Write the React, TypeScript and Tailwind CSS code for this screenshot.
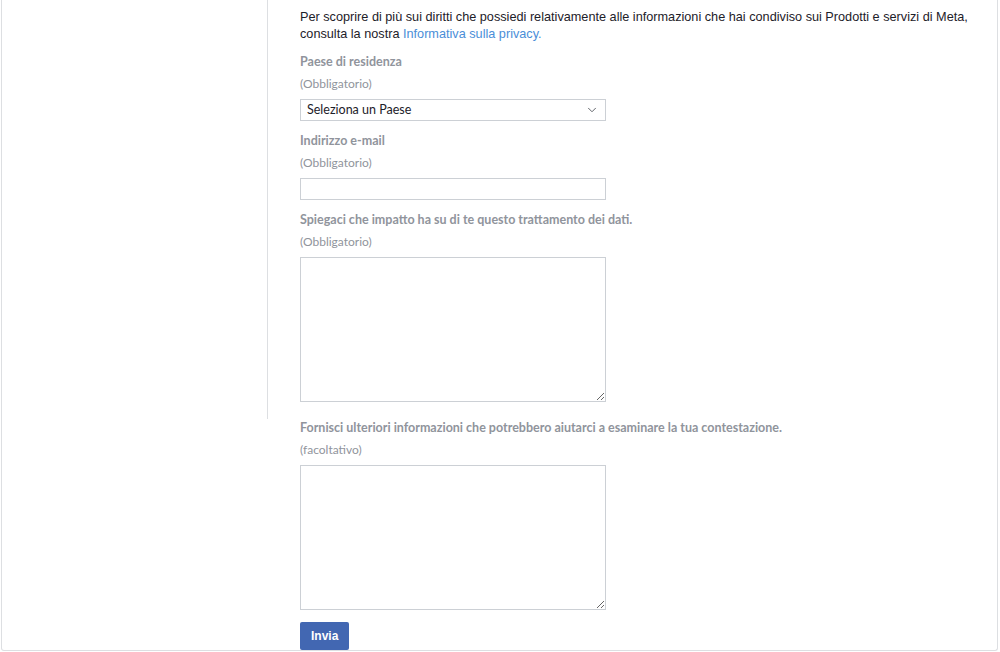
import { ChevronDown } from "lucide-react";

const Label = ({ title, note }: { title: string; note: string }) => (
  <div>
    <div className="mt-[12px] text-[12.5px] font-bold leading-[16px] text-[#90949c]">{title}</div>
    <div className="mt-[6px] text-[12px] leading-[16px] text-[#90949c]">{note}</div>
  </div>
);

const Area = () => (
  <textarea className="mt-[7px] block h-[145px] w-[306px] resize-y border border-[#ccd0d5] bg-white" />
);

export default function App() {
  return (
    <div className="h-[652px] w-[1000px] overflow-hidden bg-white font-['Liberation_Sans',Arial,sans-serif]">
      <div className="ml-[1px] flex h-[651px] w-[997px] items-start rounded-b-[3px] border-x border-b border-[#dddfe2]">
        <div className="h-[419px] w-[266px] shrink-0 border-r border-[#dddfe2]" />
        <div className="pl-[32px] pt-[9px]">
          <p className="text-[12.7px] leading-[17px] text-[#1d2129]">
            Per scoprire di più sui diritti che possiedi relativamente alle informazioni che hai condiviso sui Prodotti e servizi di Meta,
            <br />
            consulta la nostra <a className="text-[#4a8ed8]">Informativa sulla privacy.</a>
          </p>
          <div className="-mt-[1px] font-['Lato',sans-serif]">
            <Label title="Paese di residenza" note="(Obbligatorio)" />
            <div className="mt-[7px] flex h-[22px] w-[306px] items-center justify-between border border-[#ccd0d5] pl-[6px] pr-[6px] text-[12.5px] text-[#1d2129]">
              <span>Seleziona un Paese</span>
              <ChevronDown size={14} strokeWidth={1.5} className="text-[#4b4f56]" />
            </div>
            <Label title="Indirizzo e-mail" note="(Obbligatorio)" />
            <div className="mt-[7px] h-[22px] w-[306px] border border-[#ccd0d5]" />
            <Label title="Spiegaci che impatto ha su di te questo trattamento dei dati." note="(Obbligatorio)" />
            <Area />
            <div className="mt-[18px]">
              <Label title="Fornisci ulteriori informazioni che potrebbero aiutarci a esaminare la tua contestazione." note="(facoltativo)" />
            </div>
            <Area />
            <button className="mt-[12px] h-[28px] rounded-[2px] bg-[#4267b2] px-[11px] font-['Liberation_Sans',Arial,sans-serif] text-[12px] font-bold text-white">
              Invia
            </button>
          </div>
        </div>
      </div>
    </div>
  );
}
